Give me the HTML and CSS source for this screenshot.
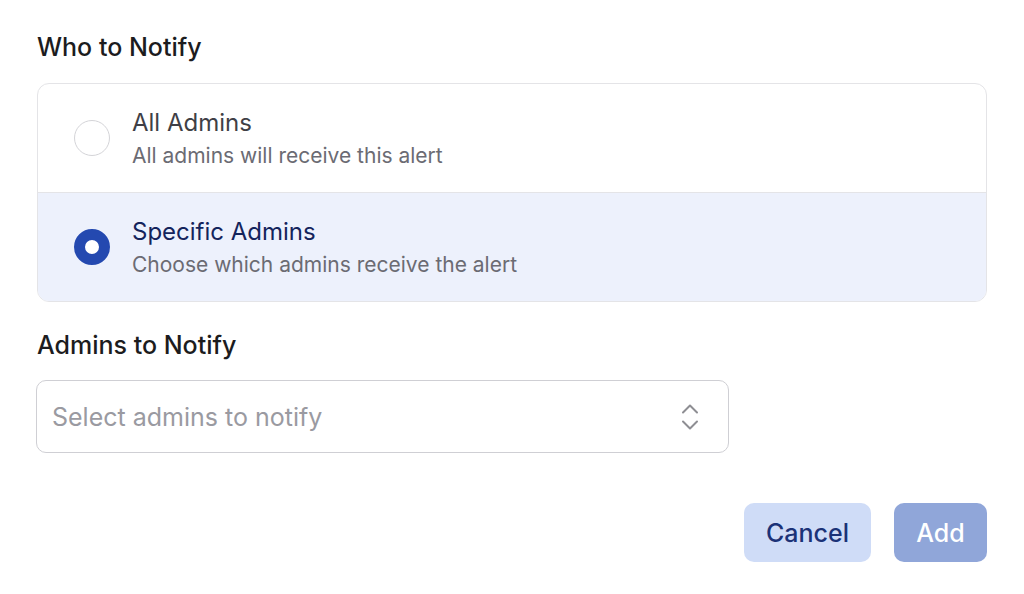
FILE: index.html
```html
<!DOCTYPE html>
<html>
<head>
<meta charset="utf-8">
<link rel="stylesheet" href="styles.css">
</head>
<body>
<div class="page">
  <h2 class="label">Who to Notify</h2>
  <div class="options">
    <div class="option">
      <span class="radio"></span>
      <div class="text">
        <div class="title">All Admins</div>
        <div class="sub">All admins will receive this alert</div>
      </div>
    </div>
    <div class="option selected">
      <span class="radio checked"></span>
      <div class="text">
        <div class="title">Specific Admins</div>
        <div class="sub">Choose which admins receive the alert</div>
      </div>
    </div>
  </div>
  <h2 class="label label2">Admins to Notify</h2>
  <div class="select">
    <span class="placeholder">Select admins to notify</span>
    <svg class="chev" width="20" height="30" viewBox="0 0 20 30" fill="none" stroke="#8e8e93" stroke-width="2" stroke-linecap="round" stroke-linejoin="round">
      <path d="M3 10.5 L10 3.5 L17 10.5"/>
      <path d="M3 19.5 L10 26.5 L17 19.5"/>
    </svg>
  </div>
  <div class="actions">
    <button class="btn cancel">Cancel</button>
    <button class="btn add">Add</button>
  </div>
</div>
</body>
</html>
```
FILE: styles.css
```css
* { box-sizing: border-box; }
html, body { margin: 0; padding: 0; background: #fff; }
body { font-family: Inter, "Noto Sans", "Liberation Sans", sans-serif; }
.page { width: 1024px; padding: 32px 37px 0 37px; }
.label { margin: 0; font-size: 25px; line-height: 30px; font-weight: 500; color: #1c1c1e; }
.label2 { margin-top: 28px; }
.options { margin-top: 21px; border: 1px solid #e4e4e7; border-radius: 12px; overflow: hidden; }
.option { height: 108px; display: flex; align-items: center; padding-left: 36px; gap: 22px; }
.option + .option { border-top: 1px solid #e4e4e7; height: 109px; }
.option.selected { background: #edf1fc; }
.radio { width: 36px; height: 36px; border-radius: 50%; border: 1px solid #d4d4d8; background: #fff; flex: none; }
.radio.checked { border: 11px solid #2449b0; background: #fff; }
.title { font-size: 24px; line-height: 30px; color: #3f3f46; font-weight: 400; }
.selected .title { color: #14245c; }
.sub { font-size: 21px; line-height: 26px; color: #6b6b73; margin-top: 5px; }
.select { margin-top: 20px; margin-left: -1px; width: 693px; height: 73px; border: 1.5px solid #cfcfd4; border-radius: 10px; display: flex; align-items: center; justify-content: space-between; padding: 0 28px 0 15px; }
.placeholder { font-size: 25px; color: #9a9aa1; }
.chev { display: block; }
.actions { margin-top: 50px; display: flex; justify-content: flex-end; gap: 23px; }
.btn { font-family: inherit; font-size: 25px; font-weight: 500; border: none; border-radius: 10px; height: 59px; padding: 0; }
.cancel { width: 127px; background: #cfdcf7; color: #1b3277; }
.add { width: 93px; background: #90a6d9; color: #fff; }
```
